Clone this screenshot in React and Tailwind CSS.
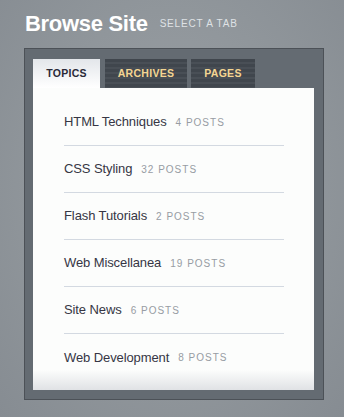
export default function App() {
  const items = [
    ["HTML Techniques", "4 POSTS"],
    ["CSS Styling", "32 POSTS"],
    ["Flash Tutorials", "2 POSTS"],
    ["Web Miscellanea", "19 POSTS"],
    ["Site News", "6 POSTS"],
    ["Web Development", "8 POSTS"],
  ];
  const stripe =
    "bg-[repeating-linear-gradient(180deg,#40464d_0px,#40464d_3px,#494f56_3px,#494f56_5px)]";
  return (
    <div
      className="w-[344px] h-[417px] overflow-hidden bg-[radial-gradient(ellipse_at_50%_45%,#9ca1a6_0%,#90969b_55%,#868c92_100%)] font-['Liberation_Sans',Arial,sans-serif]"
    >
      <div className="flex items-center pl-[25px] pt-[12px]">
        <h1 className="text-[22px] leading-[24px] font-bold text-white tracking-[-0.3px]">
          Browse Site
        </h1>
        <span className="ml-[12px] mb-[1px] text-[10px] leading-[12px] tracking-[0.8px] text-[#dfe2e5]">
          SELECT A TAB
        </span>
      </div>
      <div className="ml-[24px] mt-[12px] w-[300px] h-[352px] border border-[#4c5157] bg-[#646b72] pt-[10px] pl-[8px] pr-[9px] pb-[9px] flex flex-col">
        <div className="flex h-[29px] items-stretch">
          <div className="w-[67px] flex items-center justify-center bg-gradient-to-b from-[#e3e6ea] to-[#ffffff] text-[10.5px] font-bold text-[#2a2a38] tracking-[0.3px]">
            TOPICS
          </div>
          <div className={`ml-[5px] w-[82px] flex items-center justify-center ${stripe} text-[10.5px] font-bold text-[#f4d592] tracking-[0.3px]`}>
            ARCHIVES
          </div>
          <div className={`ml-[4px] w-[64px] flex items-center justify-center ${stripe} text-[10.5px] font-bold text-[#f4d592] tracking-[0.3px]`}>
            PAGES
          </div>
        </div>
        <div className="flex-1 bg-[linear-gradient(180deg,#fcfdfc_0%,#fcfdfc_calc(100%-20px),#e0e2e5_100%)] pt-[11px] pl-[31px] pr-[30px]">
          {items.map(([name, count], i) => (
            <div
              key={name}
              className={`h-[47px] flex items-center ${i < items.length - 1 ? "border-b border-[#d3d9e1]" : ""}`}
            >
              <span className="text-[13px] text-[#363644] tracking-[-0.1px]">{name}</span>
              <span className="ml-[9px] text-[10px] tracking-[1px] text-[#979ca3]">{count}</span>
            </div>
          ))}
        </div>
      </div>
    </div>
  );
}
